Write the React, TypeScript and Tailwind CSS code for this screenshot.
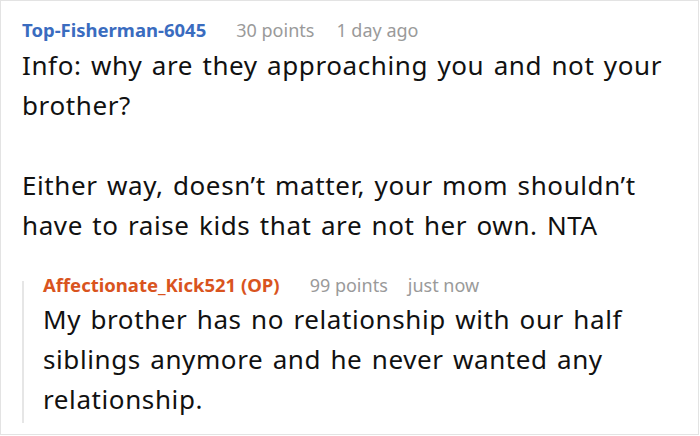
export default function App() {
  return (
    <div className="w-[700px] h-[436px] bg-white overflow-hidden">
      <div className="w-[699px] h-[435px] border border-[#e3e3e3] pl-[21px] pr-[10px] pt-[18px] font-['Noto_Sans',sans-serif]">
        <div className="flex items-baseline leading-[22px]">
          <span className="text-[18.5px] font-bold text-[#3a6cbf]">Top-Fisherman-6045</span>
          <span className="ml-[30px] text-[18px] text-[#9a9a9a]">30 points</span>
          <span className="ml-[22px] text-[18px] text-[#9a9a9a]">1 day ago</span>
        </div>
        <div className="mt-[4px] text-[26px] leading-[40px] tracking-[0.6px] [word-spacing:2px] text-[#111]">
          <p>Info: why are they approaching you and not your brother?</p>
          <p className="mt-[40px]">Either way, doesn’t matter, your mom shouldn’t have to raise kids that are not her own. NTA</p>
        </div>
        <div className="mt-[36px] border-l-2 border-[#e6e6e6] pl-[19px]">
          <div className="flex items-baseline leading-[8px]">
            <span className="text-[18.5px] font-bold text-[#d9541e]">Affectionate_Kick521 (OP)</span>
            <span className="ml-[30px] text-[18px] text-[#9a9a9a]">99 points</span>
            <span className="ml-[20px] text-[18px] text-[#9a9a9a]">just now</span>
          </div>
          <div className="mt-[10px] pb-[4px] text-[26px] leading-[40px] tracking-[0.6px] [word-spacing:2px] text-[#111]">
            <p>My brother has no relationship with our half siblings anymore and he never wanted any relationship.</p>
          </div>
        </div>
      </div>
    </div>
  )
}
